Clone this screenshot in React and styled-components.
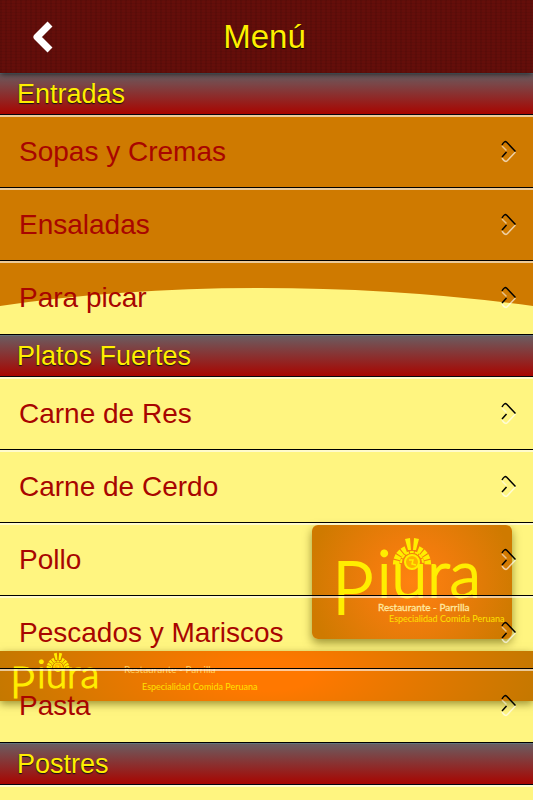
import React from 'react';
import styled, { createGlobalStyle } from 'styled-components';

const GlobalStyle = createGlobalStyle`
  * {
    box-sizing: border-box;
  }
  body {
    margin: 0;
    background: #fff580;
    font-family: "Liberation Sans", Arial, sans-serif;
  }
`;

const Page = styled.div`
  position: relative;
  display: flex;
  flex-direction: column;
  min-height: 100vh;
  overflow: hidden;
`;

// Decoration behind the lists
const Backdrop = styled.div`
  position: absolute;
  inset: 0;
  z-index: -1;
  display: flex;
  flex-direction: column;
  overflow: hidden;
`;

const Sky = styled.div`
  flex: none;
  height: 288px;
  background: #cf7a00;
`;

const Curve = styled.svg`
  display: block;
  flex: none;
  width: 100%;
  height: 18px;
`;

const LogoCard = styled.div`
  flex: none;
  align-self: flex-end;
  width: 200px;
  height: 114px;
  margin: 219px 21px 12px 0;
  border-radius: 6px;
  background: radial-gradient(circle at 50% 50%, #ff8210 0%, #f07c0c 35%, #cf7a00 90%);
  box-shadow: 0 4px 10px rgba(90, 80, 0, 0.6);
`;

const Banner = styled.div`
  flex: none;
  height: 50px;
  background: radial-gradient(ellipse 55% 200% at 50% 50%, #ff7800 0%, #ff7800 15%, #c07800 100%);
  box-shadow: 0 3px 8px rgba(90, 80, 0, 0.6);
`;

const Drawing = styled.svg`
  display: block;
  font-family: Lato, "Liberation Sans", sans-serif;
`;

const Header = styled.header`
  position: relative;
  display: grid;
  grid-template-columns: 84px 1fr 88px;
  align-items: center;
  flex: none;
  height: 73px;
  background-color: #640e0a;
  background-image:
    repeating-linear-gradient(90deg, rgba(0, 0, 0, 0.07) 0 2px, transparent 2px 5px),
    repeating-linear-gradient(0deg, rgba(0, 0, 0, 0.05) 0 1px, transparent 1px 3px);
  box-shadow: 0 1px 6px rgba(0, 0, 0, 0.7);
`;

const BackButton = styled.button`
  display: flex;
  align-items: center;
  justify-content: center;
  height: 73px;
  padding: 0;
  border: 0;
  background: none;
  cursor: pointer;
`;

const Title = styled.h1`
  margin: 0;
  color: #ffee00;
  font-size: 33px;
  font-weight: 400;
  line-height: 38px;
  text-align: center;
  text-shadow: 0 1px 1px #000;
`;

const Section = styled.section`
  flex: none;
`;

const SectionTitle = styled.h2`
  height: 42px;
  margin: 0;
  padding: 0 17px;
  border-top: 1px solid #64727c;
  border-bottom: 1px solid #050510;
  background: linear-gradient(#6b5c60, #a80500);
  color: #ffee00;
  font-size: 27px;
  font-weight: 400;
  line-height: 40px;
  text-shadow: 0 1px 1px #111;
`;

const List = styled.ul`
  min-height: 16px;
  margin: 0;
  padding: 0;
  list-style: none;
  box-shadow: inset 0 2px 0 rgba(255, 255, 255, 0.6);
`;

const Item = styled.li`
  height: 73px;
  border-bottom: 1px solid #000;

  & + & {
    box-shadow: inset 0 2px 0 rgba(255, 255, 255, 0.6);
  }
  &:last-child {
    height: 74px;
  }
`;

const ItemLink = styled.a`
  display: flex;
  align-items: center;
  justify-content: space-between;
  height: 73px;
  padding: 0 17px 0 19px;
  color: #a80500;
  font-size: 28px;
  text-decoration: none;
`;

const sections = [
  { title: 'Entradas', items: ['Sopas y Cremas', 'Ensaladas', 'Para picar'] },
  {
    title: 'Platos Fuertes',
    items: ['Carne de Res', 'Carne de Cerdo', 'Pollo', 'Pescados y Mariscos', 'Pasta'],
  },
  { title: 'Postres', items: [] },
];

const rays = [-84, -66, -48, -30, 30, 48, 66, 84];

function Arrow() {
  return (
    <svg width="15" height="23" viewBox="0 0 15 23" fill="none" strokeWidth="1.5" aria-hidden="true">
      <path d="M1 6 L5.5 10.5" stroke="#fff" strokeOpacity="0.55" />
      <path d="M14.5 12 L6 21 Q4 22.5 1 18" stroke="#fff" strokeOpacity="0.65" />
      <path d="M1 5 Q3.5 0.5 5.5 2 L14.5 11.5" stroke="#000" />
      <path d="M1 17 L5.5 12" stroke="#000" />
    </svg>
  );
}

// Word mark with the sun headdress over the "u"
function Brand() {
  return (
    <g fill="#ffee00" stroke="#ffee00" strokeWidth="2">
      <text x="20" y="89" fontSize="72" fontWeight="300">P</text>
      <text x="65" y="72" fontSize="65" fontWeight="300">iura</text>
      <g stroke="none">
        <path d="M93 14 L98 13 L99 25 L96 25 Z M102 13 L107 14 L104 25 L101 25 Z" />
        {rays.map((angle) => (
          <path key={angle} d="M-2.4 -19 L2.4 -19 L1.5 -12.5 L-1.5 -12.5 Z" transform={`translate(100 39) rotate(${angle})`} />
        ))}
        <path d="M89 38 A11 11 0 0 1 111 38" fill="none" stroke="#ffee00" strokeWidth="2" strokeDasharray="4 1" />
        <circle cx="100" cy="37" r="7" fill="#ffb000" stroke="#ffee00" strokeWidth="2" />
        <path d="M97 35 L101 35 L100 39 L104 40" fill="none" stroke="#ffee00" strokeWidth="1.5" />
      </g>
    </g>
  );
}

function Home() {
  return (
    <Page>
      <GlobalStyle />
      <Backdrop>
        <Sky />
        <Curve viewBox="0 0 533 18" preserveAspectRatio="none">
          <path d="M0 0 H533 V18 Q400 0 260 0 Q120 0 0 18 Z" fill="#cf7a00" />
        </Curve>
        <LogoCard>
          <Drawing width="200" height="114" viewBox="0 0 200 114">
            <Brand />
            <text x="66" y="86" fontSize="10" fill="#ffe9a0" stroke="#ffe9a0" strokeWidth="0.3">Restaurante - Parrilla</text>
            <text x="77" y="97" fontSize="9" fill="#ffe000">Especialidad Comida Peruana</text>
          </Drawing>
        </LogoCard>
        <Banner>
          <Drawing width="270" height="50" viewBox="0 0 270 50">
            <g transform="translate(-2 -6) scale(0.6)">
              <Brand />
            </g>
            <text x="124" y="22" fontSize="10" fill="#ffd060">Restaurante - Parrilla</text>
            <text x="142" y="39" fontSize="9" fill="#ffe000">Especialidad Comida Peruana</text>
          </Drawing>
        </Banner>
      </Backdrop>

      <Header>
        <BackButton aria-label="Volver">
          <svg width="24" height="34" viewBox="0 0 24 34" fill="none" stroke="#fff" strokeWidth="7" strokeLinejoin="round">
            <path d="M20 4 L7 17 L20 30" />
          </svg>
        </BackButton>
        <Title>Menú</Title>
      </Header>

      {sections.map((section) => (
        <Section key={section.title}>
          <SectionTitle>{section.title}</SectionTitle>
          <List>
            {section.items.map((item) => (
              <Item key={item}>
                <ItemLink href="#">
                  {item}
                  <Arrow />
                </ItemLink>
              </Item>
            ))}
          </List>
        </Section>
      ))}
    </Page>
  );
}

export default Home;
